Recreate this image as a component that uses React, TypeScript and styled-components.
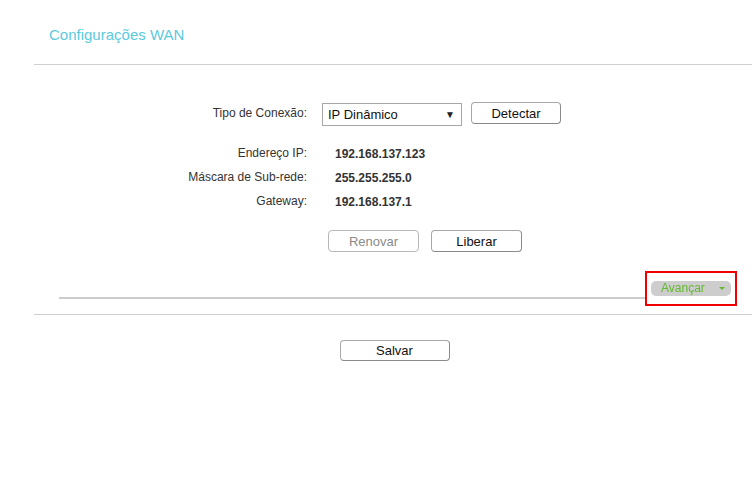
import styled, { createGlobalStyle } from "styled-components";

const GlobalStyle = createGlobalStyle`
  html, body {
    margin: 0;
    padding: 0;
    background: #fff;
  }
  body {
    font-family: "Liberation Sans", Arial, sans-serif;
    color: #333;
  }
`;

interface InfoRow {
  label: string;
  value: string;
}

const rows: InfoRow[] = [
  { label: "Endereço IP:", value: "192.168.137.123" },
  { label: "Máscara de Sub-rede:", value: "255.255.255.0" },
  { label: "Gateway:", value: "192.168.137.1" },
];

const App = () => {
  return (
    <Page>
      <GlobalStyle />
      <Header>
        <Title>Configurações WAN</Title>
      </Header>
      <Divider />
      <Form>
        <Label>Tipo de Conexão:</Label>
        <Field>
          <Select>
            <span>IP Dinâmico</span>
            <Caret>▼</Caret>
          </Select>
          <Button $width={90}>Detectar</Button>
        </Field>
        <Spacer />
        {rows.map((r) => (
          <Row key={r.label}>
            <Label>{r.label}</Label>
            <Value>{r.value}</Value>
          </Row>
        ))}
        <Actions>
          <Button $width={91} disabled>
            Renovar
          </Button>
          <Button $width={91}>Liberar</Button>
        </Actions>
      </Form>
      <Advanced>
        <AdvLine />
        <Highlight>
          <Pill>
            Avançar
            <PillArrow />
          </Pill>
        </Highlight>
      </Advanced>
      <Divider $gap={8} />
      <Footer>
        <Button $width={110} $height={21}>
          Salvar
        </Button>
      </Footer>
    </Page>
  );
};

export default App;

const Page = styled.div`
  width: 752px;
  height: 490px;
  padding-left: 34px;
  box-sizing: border-box;
  overflow: hidden;
`;

const Header = styled.div`
  height: 64px;
  padding: 26px 0 0 15px;
  box-sizing: border-box;
`;

const Title = styled.h1`
  margin: 0;
  font-size: 15px;
  line-height: 18px;
  font-weight: normal;
  color: #5ccadd;
`;

const Divider = styled.div<{ $gap?: number }>`
  height: 1px;
  margin-top: ${(p) => p.$gap ?? 0}px;
  background: #cfcfcf;
`;

const Form = styled.div`
  display: grid;
  grid-template-columns: 273px 1fr;
  column-gap: 15px;
  margin-top: 37px;
  font-size: 12px;
`;

const Row = styled.div`
  display: contents;
  > * {
    height: 24px;
    line-height: 24px;
  }
`;

const Spacer = styled.div`
  grid-column: 1 / span 2;
  height: 16px;
`;

const Label = styled.div`
  text-align: right;
  color: #333;
  line-height: 22px;
`;

const Field = styled.div`
  display: flex;
  align-items: flex-start;
  gap: 9px;
  height: 24px;
`;

const Value = styled.div`
  padding-left: 13px;
  font-weight: bold;
  color: #333;
`;

const Select = styled.div`
  width: 140px;
  height: 23px;
  margin-top: 1px;
  box-sizing: border-box;
  border: 1px solid #a6a6a6;
  background: #fff;
  display: flex;
  align-items: center;
  justify-content: space-between;
  padding: 0 6px 0 5px;
  font-size: 13px;
  color: #111;
`;

const Caret = styled.span`
  font-size: 10px;
  color: #222;
`;

const Button = styled.button<{ $width: number; $height?: number }>`
  width: ${(p) => p.$width}px;
  height: ${(p) => p.$height ?? 22}px;
  box-sizing: border-box;
  padding: 0;
  border: 1px solid #a8a8a8;
  border-right-color: #8a8a8a;
  border-bottom-color: #8a8a8a;
  border-radius: 4px;
  background: #fff;
  font-family: "Liberation Sans", Arial, sans-serif;
  font-size: 13px;
  color: #111;
  &:disabled {
    color: #8a8a8a;
    border-color: #b8b8b8;
  }
`;

const Actions = styled.div`
  grid-column: 2;
  display: flex;
  gap: 12px;
  margin-top: 16px;
  padding-left: 6px;
`;

const Advanced = styled.div`
  display: flex;
  align-items: flex-start;
  margin-top: 19px;
  padding-left: 25px;
  padding-right: 15px;
`;

const AdvLine = styled.div`
  flex: 1;
  height: 2px;
  margin-top: 26px;
  background: #cccccc;
`;

const Highlight = styled.div`
  border: 2px solid #f00000;
  padding: 8px 4px 8px 4px;
`;

const Pill = styled.div`
  width: 80px;
  height: 15px;
  border-radius: 5px;
  background: #cdcdcd;
  color: #62b92f;
  font-size: 12px;
  line-height: 15px;
  display: flex;
  align-items: center;
  padding-left: 10px;
  box-sizing: border-box;
  filter: blur(0.3px);
`;

const PillArrow = styled.span`
  margin-left: 14px;
  width: 0;
  height: 0;
  border-left: 3px solid transparent;
  border-right: 3px solid transparent;
  border-top: 3px solid #62b92f;
`;

const Footer = styled.div`
  display: flex;
  justify-content: center;
  padding-top: 25px;
  padding-left: 3px;
`;
